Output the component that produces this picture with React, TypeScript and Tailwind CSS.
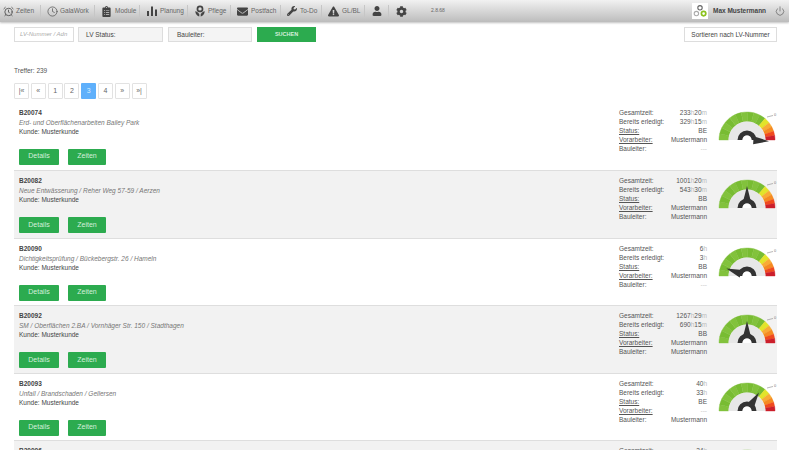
import React from "react";
import { AlarmClock, Clock, Power } from "lucide-react";
import { FaClipboardList, FaWrench, FaExclamationTriangle, FaUser, FaCog, FaEnvelope } from "react-icons/fa";

const pt = (cx: number, cy: number, r: number, deg: number) => {
  const a = (deg * Math.PI) / 180;
  return [cx + r * Math.cos(a), cy - r * Math.sin(a)];
};

const seg = (r0: number, r1: number, from: number, to: number) => {
  const [a, b] = pt(30, 30, r1, from);
  const [c, d] = pt(30, 30, r1, to);
  const [e, f] = pt(30, 30, r0, to);
  const [g, h] = pt(30, 30, r0, from);
  return `M${a} ${b}A${r1} ${r1} 0 0 1 ${c} ${d}L${e} ${f}A${r0} ${r0} 0 0 0 ${g} ${h}Z`;
};

const bands: [number, number, string][] = [
  [180, 167, "#82c23c"], [167, 154, "#78bc32"], [154, 141, "#82c23c"], [141, 128, "#78bc32"],
  [128, 115, "#82c23c"], [115, 102, "#78bc32"], [102, 89, "#82c23c"], [89, 76, "#78bc32"],
  [76, 63, "#82c23c"], [63, 50, "#78bc32"], [50, 38, "#e2e42a"], [38, 28, "#f8ab35"],
  [28, 18, "#f58a22"], [18, 9, "#f04a1e"], [9, 0, "#cc1f2b"],
];

function Gauge({ angle }: { angle: number }) {
  const tip = pt(30, 30, 22, angle);
  const l = pt(30, 30, 7.5, angle + 32);
  const r = pt(30, 30, 7.5, angle - 32);
  return (
    <svg width="60" height="36" viewBox="0 0 60 36" className="block overflow-hidden">
      {bands.map(([a, b, c]) => (
        <path key={a} d={seg(18.5, 28, a, b)} fill={c} stroke={c} strokeWidth="0.4" />
      ))}
      <path d={seg(0, 18.5, 180, 0)} fill="#e7e7e7" />
      <path d="M50 7L56 5.5" stroke="#888" strokeWidth="0.6" fill="none" />
      <text x="57" y="6" fontSize="4" fill="#777" fontFamily="Liberation Sans">0</text>
      <path d={`M${tip[0]} ${tip[1]}L${l[0]} ${l[1]}L${r[0]} ${r[1]}Z`} fill="#333" />
      <path d={seg(4.5, 9.5, 180, 0)} fill="#333" />
      <path d={seg(0, 4.5, 180, 0)} fill="#fff" />
    </svg>
  );
}

function Pflege() {
  return (
    <svg width="10" height="12" viewBox="0 0 10 12" fill="#444">
      <path fillRule="evenodd" d="M5 0.5a3.4 3.4 0 1 1 0 6.8a3.4 3.4 0 0 1 0-6.8ZM5 2.2a1.7 1.7 0 1 0 0 3.4a1.7 1.7 0 0 0 0-3.4Z" />
      <path d="M0.2 6.3C1.6 6.5 3 7.5 4.3 9L4.3 11.5C2.6 11.4 0.6 9.6 0.2 6.3ZM9.8 6.3C8.4 6.5 7 7.5 5.7 9L5.7 11.5C7.4 11.4 9.4 9.6 9.8 6.3Z" />
    </svg>
  );
}

function Bars() {
  return (
    <svg width="10" height="10" viewBox="0 0 10 10" fill="#444">
      <rect x="0" y="5" width="2" height="5" />
      <rect x="4" y="0.5" width="2" height="9.5" />
      <rect x="8" y="3.5" width="2" height="6.5" />
    </svg>
  );
}

function Logo() {
  return (
    <svg width="14" height="14" viewBox="0 0 14 14" fill="none">
      <circle cx="7" cy="3.8" r="2.2" stroke="#666" strokeWidth="1.1" />
      <circle cx="3.4" cy="9.6" r="2.2" stroke="#aaa" strokeWidth="1.1" />
      <circle cx="10.6" cy="9.6" r="2.2" stroke="#8cc21f" strokeWidth="1.7" />
    </svg>
  );
}

const nav = [
  { w: "w-[41px]", icon: <AlarmClock size={11} color="#555" strokeWidth={2} />, label: "Zeiten", pl: "pl-[3px]", gap: "gap-[2px]" },
  { w: "w-[54px]", icon: <Clock size={11} color="#555" strokeWidth={1.6} />, label: "GalaWork", pl: "pl-[6px]", gap: "gap-[2px]" },
  { w: "w-[45px]", icon: <FaClipboardList size={11} color="#444" />, label: "Module", pl: "pl-[6px]", gap: "gap-[3px]" },
  { w: "w-[48px]", icon: <Bars />, label: "Planung", pl: "pl-[7px]", gap: "gap-[3px]" },
  { w: "w-[43px]", icon: <Pflege />, label: "Pflege", pl: "pl-[7px]", gap: "gap-[3px]" },
  { w: "w-[50px]", icon: <FaEnvelope size={11} color="#444" />, label: "Postfach", pl: "pl-[6px]", gap: "gap-[3px]" },
  { w: "w-[41px]", icon: <FaWrench size={10} color="#444" />, label: "To-Do", pl: "pl-[6px]", gap: "gap-[3px]" },
  { w: "w-[43px]", icon: <FaExclamationTriangle size={11} color="#444" />, label: "GL/BL", pl: "pl-[6px]", gap: "gap-[3px]" },
];

type V = [string, string][];
const t = (n: string, u: string): V => [[n, "text-[#555]"], [u, "text-[#bbb]"]];

const rows: { id: string; desc: string; total: V; done: V; status: string; vor: string; bau: string; angle: number }[] = [
  { id: "B20074", desc: "Erd- und Oberflächenarbeiten Bailey Park", total: [...t("233", "h"), ...t("20", "m")], done: [...t("329", "h"), ...t("15", "m")], status: "BE", vor: "Mustermann", bau: "---", angle: -3 },
  { id: "B20082", desc: "Neue Entwässerung / Reher Weg 57-59 / Aerzen", total: [...t("1001", "h"), ...t("20", "m")], done: [...t("543", "h"), ...t("30", "m")], status: "BB", vor: "Mustermann", bau: "Mustermann", angle: 90 },
  { id: "B20090", desc: "Dichtigkeitsprüfung / Bückebergstr. 26 / Hameln", total: t("6", "h"), done: t("3", "h"), status: "BB", vor: "Mustermann", bau: "---", angle: 160 },
  { id: "B20092", desc: "SM / Oberflächen 2.BA / Vornhäger Str. 150 / Stadthagen", total: [...t("1267", "h"), ...t("29", "m")], done: [...t("690", "h"), ...t("15", "m")], status: "BB", vor: "Mustermann", bau: "Mustermann", angle: 90 },
  { id: "B20093", desc: "Unfall / Brandschaden / Gellersen", total: t("40", "h"), done: t("33", "h"), status: "BE", vor: "---", bau: "Mustermann", angle: 57 },
  { id: "B20096", desc: "", total: t("24", "h"), done: t("12", "h"), status: "BB", vor: "Mustermann", bau: "Mustermann", angle: 90 },
];

const Btn = ({ w, children }: { w: string; children: string }) => (
  <div className={`${w} h-[16px] bg-[#2cab4f] rounded-[1px] text-[#d5efdc] text-[7px] flex items-center justify-center`}>{children}</div>
);

function Stat({ label, under, children }: { label: string; under?: boolean; children: React.ReactNode }) {
  return (
    <div className="flex justify-between h-[9px] leading-[9px]">
      <span className={under ? "underline text-[#555]" : "text-[#555]"}>{label}</span>
      <span className="text-[#555]">{children}</span>
    </div>
  );
}

const Time = ({ v }: { v: V }) => (
  <>
    {v.map(([s, c], i) => (
      <span key={i} className={c}>{s}</span>
    ))}
  </>
);

const Dash = ({ v }: { v: string }) => <span className={v === "---" ? "text-[#ccc]" : ""}>{v}</span>;

const inputBase = "h-[15px] bg-[#f4f4f4] border border-[#ddd] flex items-center";

export default function App() {
  return (
    <div className="w-[789px] h-[450px] overflow-hidden bg-white font-['Liberation_Sans',Arial,sans-serif]">
      <header className="h-[22px] flex items-center bg-gradient-to-b from-[#f2f2f2] to-[#bcbcbc] shadow-[0_1px_2px_rgba(0,0,0,0.25)] relative">
        {nav.map((n) => (
          <div key={n.label} className={`${n.w} ${n.pl} ${n.gap} h-[12px] flex items-center shrink-0 border-r border-[#c6c6c6] text-[6.5px] text-[#666]`}>
            {n.icon}
            <span>{n.label}</span>
          </div>
        ))}
        <div className="w-[24px] h-[12px] shrink-0 flex items-center justify-center border-r border-[#c6c6c6]">
          <FaUser size={10} color="#444" />
        </div>
        <div className="w-[42px] pl-[7px] shrink-0">
          <FaCog size={11} color="#444" />
        </div>
        <span className="text-[5px] text-[#666]">2.8.68</span>
        <div className="ml-auto flex items-center h-full">
          <div className="w-[16px] h-[16px] bg-white flex items-center justify-center">
            <Logo />
          </div>
          <span className="ml-[5px] w-[62px] text-[6.5px] font-bold text-[#444]">Max Mustermann</span>
          <Power size={10} color="#555" strokeWidth={1.5} className="mr-[4px]" />
        </div>
      </header>

      <div className="pl-[14px] pr-[12px] pt-[5px] h-[45px] flex items-start">
        <div className={`${inputBase} w-[60px] bg-white pl-[5px] text-[6px] italic text-[#aaa] overflow-hidden whitespace-nowrap`}>LV-Nummer / Adn</div>
        <div className={`${inputBase} w-[85px] ml-[4px] pl-[7px] text-[6.5px] text-[#444]`}>LV Status:</div>
        <div className={`${inputBase} w-[84px] ml-[5px] pl-[8px] text-[6.5px] text-[#444]`}>Bauleiter:</div>
        <div className="w-[59px] h-[15px] ml-[5px] bg-[#2cab4f] text-[5.5px] font-bold text-[#d5efdc] flex items-center justify-center">SUCHEN</div>
        <div className="ml-auto w-[93px] h-[15px] bg-white border border-[#ddd] text-[6.5px] text-[#444] flex items-center justify-center">Sortieren nach LV-Nummer</div>
      </div>

      <div className="px-[14px] text-[6.5px] leading-[8px] text-[#555]">Treffer: 239</div>

      <div className="px-[14px] mt-[8px] flex gap-[1.8px]">
        {["|«", "«", "1", "2", "3", "4", "»", "»|"].map((p) => (
          <div key={p} className={`w-[15px] h-[16px] text-[7px] flex items-center justify-center rounded-[1px] ${p === "3" ? "bg-[#5fb0fb] text-[#d8ecff]" : "bg-white border border-[#e2e2e2] text-[#666]"}`}>{p}</div>
        ))}
      </div>

      <div className="ml-[14px] mr-[12px] mt-[3.5px]">
        {rows.map((r, i) => (
          <div key={r.id} className={`h-[67.5px] flex pl-[5px] pr-0 pt-[5px] border-t border-[#dedede] first:border-t-0 ${i % 2 ? "bg-[#f2f2f2]" : "bg-white"}`}>
            <div className="flex-1 flex flex-col">
              <div className="text-[6.5px] leading-[9px] font-bold text-[#444]">{r.id}</div>
              <div className="mt-[1px] text-[6.5px] leading-[9px] italic text-[#777]">{r.desc}</div>
              <div className="text-[6.5px] leading-[9px] text-[#444]">Kunde: Musterkunde</div>
              <div className="mt-[13px] flex gap-[9px]">
                <Btn w="w-[40px]">Details</Btn>
                <Btn w="w-[38px]">Zeiten</Btn>
              </div>
            </div>
            <div className="w-[88px] text-[6.5px]">
              <Stat label="Gesamtzeit:"><Time v={r.total} /></Stat>
              <Stat label="Bereits erledigt:"><Time v={r.done} /></Stat>
              <Stat label="Status:" under>{r.status}</Stat>
              <Stat label="Vorarbeiter:" under><Dash v={r.vor} /></Stat>
              <Stat label="Bauleiter:"><Dash v={r.bau} /></Stat>
            </div>
            <div className="w-[70px] pl-[10px] mt-[2px] shrink-0 overflow-hidden">
              <Gauge angle={r.angle} />
            </div>
          </div>
        ))}
      </div>
    </div>
  );
}
